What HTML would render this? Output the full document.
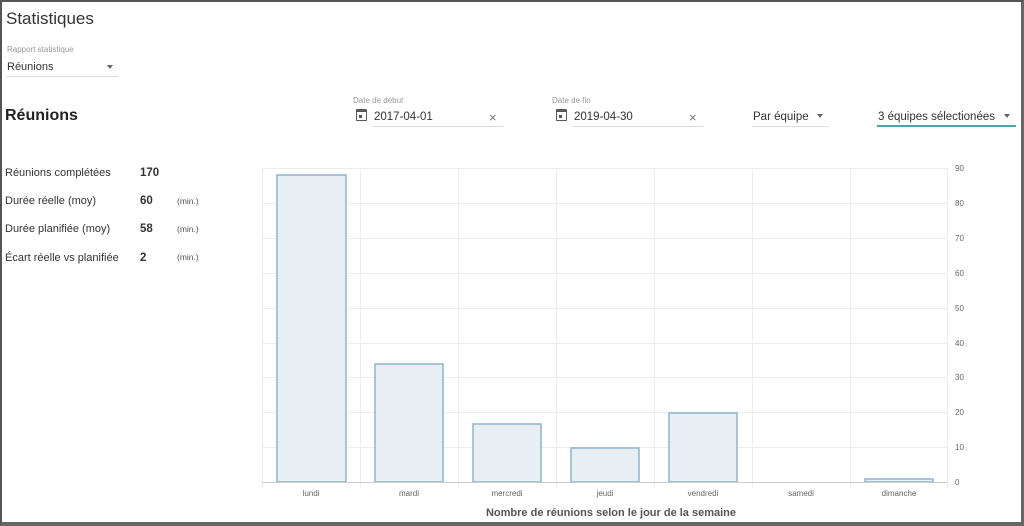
<!DOCTYPE html>
<html><head><meta charset="utf-8"><style>
*{margin:0;padding:0;box-sizing:border-box}
body{width:1024px;height:526px;overflow:hidden;background:#fff;font-family:"Liberation Sans",sans-serif;color:#333;position:relative}
.frame{position:absolute;left:0;top:0;width:1024px;height:526px;border:2px solid #555;border-bottom:4px solid #666;border-right:3px solid #666}
.a{position:absolute;white-space:nowrap}
.lbl{font-size:8px;color:#999}
.ul{position:absolute;height:1px;background:#ddd}
.arrow{position:absolute;width:0;height:0;border-left:3px solid transparent;border-right:3px solid transparent;border-top:4px solid #666}
.cal{position:absolute;width:11px;height:12px;border:1.5px solid #555;border-top-width:3px;border-radius:1px}
.cal:after{content:"";position:absolute;left:2px;top:3px;width:3px;height:3px;background:#555}
.x{position:absolute;font-size:13px;color:#777}
.st{font-size:11px;color:#333}
.sv{font-size:11.5px;font-weight:bold;color:#333}
.su{font-size:8.5px;color:#555}
</style></head><body>
<div class="a" style="left:6px;top:9px;font-size:17px;color:#333">Statistiques</div>
<div class="a lbl" style="left:7px;top:45px">Rapport statistique</div>
<div class="a" style="left:7px;top:61px;font-size:11px">Réunions</div>
<div class="arrow" style="left:107px;top:65px"></div>
<div class="ul" style="left:6px;top:76px;width:112px"></div>
<div class="a" style="left:5px;top:107px;font-size:16px;font-weight:bold;color:#222">Réunions</div>

<div class="a lbl" style="left:353px;top:96px">Date de début</div>
<div class="cal" style="left:356px;top:109px"></div>
<div class="a" style="left:374px;top:111px;font-size:11.5px">2017-04-01</div>
<div class="x" style="left:489px;top:110px">×</div>
<div class="ul" style="left:372px;top:126px;width:131px"></div>
<div class="a lbl" style="left:552px;top:96px">Date de fin</div>
<div class="cal" style="left:556px;top:109px"></div>
<div class="a" style="left:574px;top:111px;font-size:11.5px">2019-04-30</div>
<div class="x" style="left:689px;top:110px">×</div>
<div class="ul" style="left:572px;top:126px;width:131px"></div>
<div class="a" style="left:753px;top:111px;font-size:11.5px">Par équipe</div>
<div class="arrow" style="left:817px;top:114px"></div>
<div class="ul" style="left:752px;top:126px;width:77px"></div>
<div class="a" style="left:878px;top:111px;font-size:11.5px">3 équipes sélectionées</div>
<div class="arrow" style="left:1004px;top:114px"></div>
<div class="ul" style="left:877px;top:125px;width:139px;height:2px;background:#4aa8a4"></div>

<div class="a st" style="left:5px;top:167px">Réunions complétées</div><div class="a sv" style="left:140px;top:167px">170</div>
<div class="a st" style="left:5px;top:195px">Durée réelle (moy)</div><div class="a sv" style="left:140px;top:195px">60</div><div class="a su" style="left:177px;top:196px">(min.)</div>
<div class="a st" style="left:5px;top:223px">Durée planifiée (moy)</div><div class="a sv" style="left:140px;top:223px">58</div><div class="a su" style="left:177px;top:224px">(min.)</div>
<div class="a st" style="left:5px;top:252px">Écart réelle vs planifiée</div><div class="a sv" style="left:140px;top:252px">2</div><div class="a su" style="left:177px;top:252px">(min.)</div>

<svg class="a" style="left:0;top:0" width="1024" height="526">
<g stroke="#ececec" stroke-width="1">
<line x1="262" y1="168.5" x2="947" y2="168.5"/><line x1="262" y1="203.5" x2="947" y2="203.5"/><line x1="262" y1="238.5" x2="947" y2="238.5"/><line x1="262" y1="273.5" x2="947" y2="273.5"/><line x1="262" y1="308.5" x2="947" y2="308.5"/><line x1="262" y1="343.5" x2="947" y2="343.5"/><line x1="262" y1="377.5" x2="947" y2="377.5"/><line x1="262" y1="412.5" x2="947" y2="412.5"/><line x1="262" y1="447.5" x2="947" y2="447.5"/>
<line x1="262.5" y1="168" x2="262.5" y2="488"/><line x1="360.5" y1="168" x2="360.5" y2="488"/><line x1="458.5" y1="168" x2="458.5" y2="488"/><line x1="556.5" y1="168" x2="556.5" y2="488"/><line x1="654.5" y1="168" x2="654.5" y2="488"/><line x1="752.5" y1="168" x2="752.5" y2="488"/><line x1="850.5" y1="168" x2="850.5" y2="488"/><line x1="947.5" y1="168" x2="947.5" y2="488"/>
</g>
<g fill="#e8eff4" stroke="#8fb3c9" stroke-width="1.5">
<rect x="277" y="175" width="69" height="307"/><rect x="375" y="364" width="68" height="118"/><rect x="473" y="424" width="68" height="58"/><rect x="571" y="448" width="68" height="34"/><rect x="669" y="413" width="68" height="69"/><rect x="865" y="479" width="68" height="3"/>
</g>
<line x1="262" y1="482.5" x2="947" y2="482.5" stroke="#ccc"/>
<g font-family="Liberation Sans" font-size="8" fill="#666">
<text x="955" y="171">90</text><text x="955" y="206">80</text><text x="955" y="241">70</text><text x="955" y="276">60</text><text x="955" y="311">50</text><text x="955" y="346">40</text><text x="955" y="380">30</text><text x="955" y="415">20</text><text x="955" y="450">10</text><text x="955" y="485">0</text>
</g>
<g font-family="Liberation Sans" font-size="8" fill="#666" text-anchor="middle">
<text x="311" y="496">lundi</text><text x="409" y="496">mardi</text><text x="507" y="496">mercredi</text><text x="605" y="496">jeudi</text><text x="703" y="496">vendredi</text><text x="801" y="496">samedi</text><text x="899" y="496">dimanche</text>
</g>
<text x="611" y="516" text-anchor="middle" font-family="Liberation Sans" font-size="11" font-weight="bold" fill="#555">Nombre de réunions selon le jour de la semaine</text>
</svg>
<div class="frame"></div>
</body></html>
